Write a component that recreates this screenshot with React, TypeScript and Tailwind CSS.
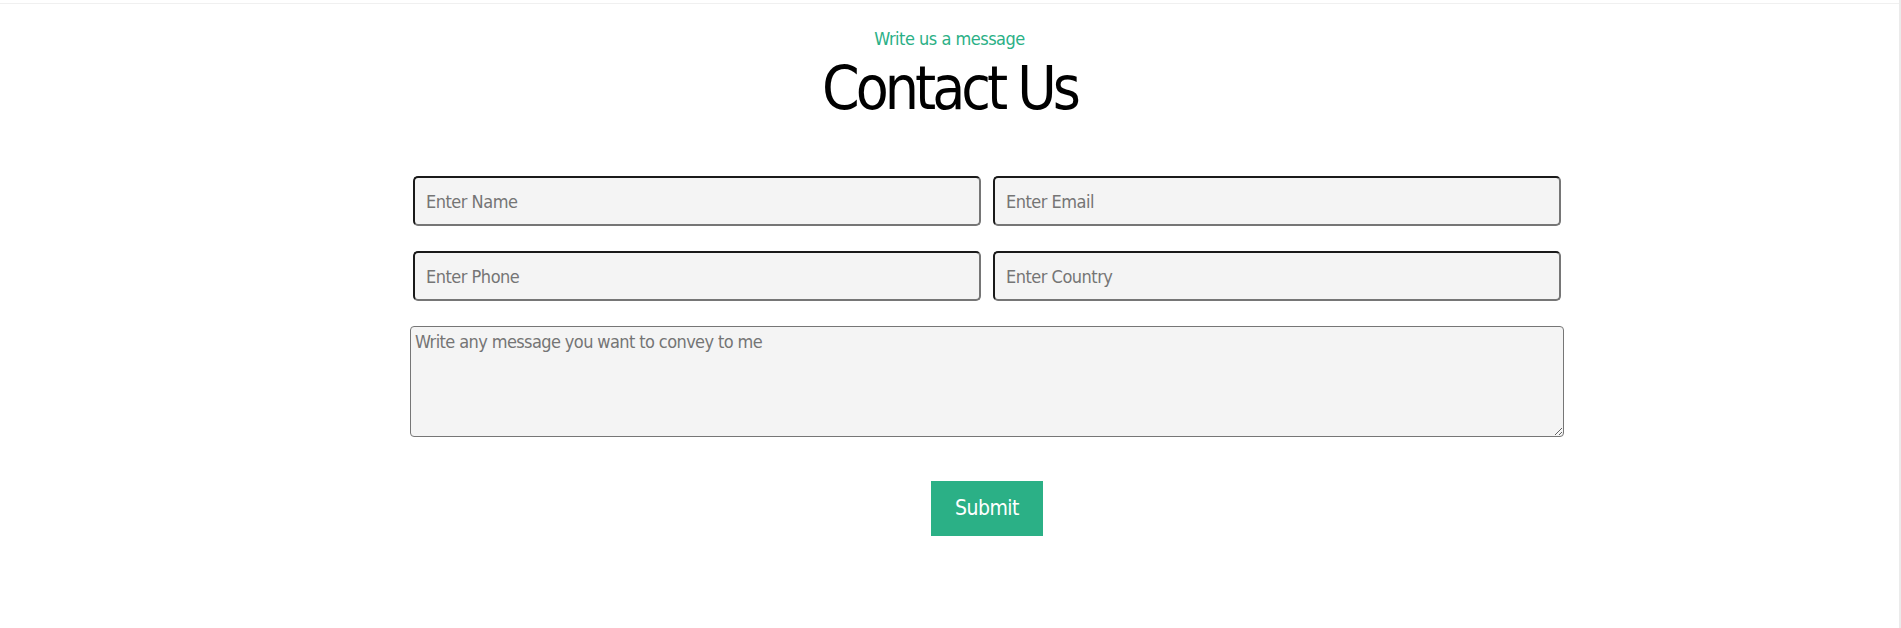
import React from "react";

const font = { fontFamily: '"DejaVu Sans Condensed", "Liberation Sans", sans-serif' };

export default function App() {
  const inputCls =
    "h-[50px] w-full rounded-[5px] border-2 border-t-[#1a1a1a] border-l-[#1a1a1a] border-b-[#767676] border-r-[#767676] bg-[#f4f4f4] pl-[11px] text-[18px] tracking-[-0.5px] text-[#111] placeholder:text-[#757575] outline-none";
  return (
    <div className="flex min-h-[628px] w-full bg-white" style={font}>
      <div className="flex flex-1 flex-col">
        <div className="mt-[3px] h-px w-full bg-[#f0f0f0]" />
        <div className="flex flex-col items-center pt-[23px]">
          <p className="text-[18px] leading-[24px] tracking-[-0.5px] text-[#2bb086]">Write us a message</p>
          <h1 className="mt-[5px] text-[60px] leading-[64px] tracking-[-4px] text-black">Contact Us</h1>
        </div>
        <form className="flex justify-center pl-[75px] pt-[56px]" onSubmit={(e) => e.preventDefault()}>
          <div className="flex w-[1154px] flex-col items-center">
            <div className="grid w-[1148px] grid-cols-2 gap-x-[12px] gap-y-[25px]">
              <input className={inputCls} placeholder="Enter Name" />
              <input className={inputCls} placeholder="Enter Email" />
              <input className={inputCls} placeholder="Enter Phone" />
              <input className={inputCls} placeholder="Enter Country" />
            </div>
            <textarea
              className="mt-[25px] h-[111px] w-[1154px] rounded-[4px] border border-[#767676] bg-[#f4f4f4] px-[4px] pt-[3px] text-[18px] leading-[23px] tracking-[-0.6px] text-[#111] placeholder:text-[#757575] outline-none"
              placeholder="Write any message you want to convey to me"
            />
            <button
              type="submit"
              className="mt-[44px] h-[55px] w-[112px] bg-[#2bb086] text-[21px] tracking-[-0.5px] text-white"
            >
              Submit
            </button>
          </div>
        </form>
      </div>
      <div className="w-[2px] bg-[#ebebeb]" />
    </div>
  );
}
